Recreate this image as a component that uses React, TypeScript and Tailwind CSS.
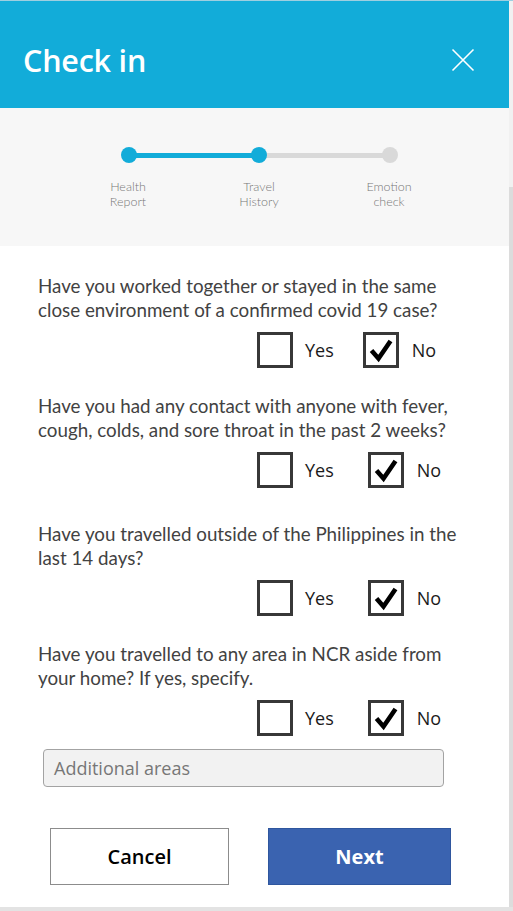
import React from "react";

type Question = {
  text: string[];
  mt: string;
  noGap: string;
};

const questions: Question[] = [
  {
    text: ["Have you worked together or stayed in the same", "close environment of a confirmed covid 19 case?"],
    mt: "mt-[28px]",
    noGap: "ml-[29px]",
  },
  {
    text: ["Have you had any contact with anyone with fever,", "cough, colds, and sore throat in the past 2 weeks?"],
    mt: "mt-[26px]",
    noGap: "ml-[34px]",
  },
  {
    text: ["Have you travelled outside of the Philippines in the", "last 14 days?"],
    mt: "mt-[34px]",
    noGap: "ml-[34px]",
  },
  {
    text: ["Have you travelled to any area in NCR aside from", "your home? If yes, specify."],
    mt: "mt-[26px]",
    noGap: "ml-[34px]",
  },
];

const steps = [
  { label: ["Health", "Report"], x: "left-[128px]" },
  { label: ["Travel", "History"], x: "left-[259px]" },
  { label: ["Emotion", "check"], x: "left-[389px]" },
];

const Box: React.FC<{ checked?: boolean }> = ({ checked }) => (
  <div className="flex h-[36px] w-[36px] shrink-0 items-center justify-center border-[3px] border-[#383838] bg-white">
    {checked && (
      <svg width="30" height="30" viewBox="0 0 30 30">
        <path d="M5.5 15.5 L12.5 23.5 L24.5 6" fill="none" stroke="#000" strokeWidth="4.6" strokeLinejoin="miter" />
      </svg>
    )}
  </div>
);

export default function App() {
  return (
    <div className="flex h-[911px] w-[513px] flex-col overflow-hidden bg-[#e3e3e3]">
      <div className="h-px w-full bg-[#9fcfe0]" />
      <div className="flex flex-1">
        <div className="flex w-[509px] flex-col bg-white">
          {/* header */}
          <div className="flex h-[107px] items-center justify-between bg-[#12acd9] pl-[23px] pr-[34px] pt-[13px]">
            <h1 className="text-[30.5px] font-semibold text-white [font-family:'Open_Sans',sans-serif] tracking-[-0.2px]">
              Check in
            </h1>
            <svg width="24" height="24" viewBox="0 0 24 24" className="mt-[-2px]">
              <path d="M1.5 1.5 L22.5 22.5 M22.5 1.5 L1.5 22.5" stroke="#fff" strokeWidth="1.6" />
            </svg>
          </div>

          {/* stepper */}
          <div className="relative h-[138px] bg-[#f7f7f7] [font-family:Lato,sans-serif]">
            <div className="absolute left-[129px] top-[45px] h-[5px] w-[130px] bg-[#12acd9]" />
            <div className="absolute left-[259px] top-[45px] h-[5px] w-[131px] bg-[#d9d9d9]" />
            <div className="absolute left-[121px] top-[39px] h-[16px] w-[16px] rounded-full bg-[#12acd9]" />
            <div className="absolute left-[251px] top-[39px] h-[16px] w-[16px] rounded-full bg-[#12acd9]" />
            <div className="absolute left-[382px] top-[39px] h-[16px] w-[16px] rounded-full bg-[#d9d9d9]" />
            {steps.map((s) => (
              <div
                key={s.label[0]}
                className={`absolute top-[71px] w-[80px] -translate-x-1/2 text-center text-[12.5px] font-light leading-[15px] text-[#777] ${s.x}`}
              >
                {s.label[0]}
                <br />
                {s.label[1]}
              </div>
            ))}
          </div>

          {/* questions */}
          <div className="flex flex-col">
            {questions.map((q, i) => (
              <div key={i} className={`flex flex-col ${q.mt}`}>
                <p className="pl-[38px] text-[18.8px] leading-[24px] text-[#424242] [font-family:Lato,sans-serif]">
                  {q.text[0]}
                  <br />
                  {q.text[1]}
                </p>
                <div className="mt-[10px] flex items-center pl-[257px] text-[18px] text-[#1a1a1a] [font-family:'Open_Sans',sans-serif]">
                  <Box />
                  <span className="ml-[12px]">Yes</span>
                  <div className={q.noGap}>
                    <Box checked />
                  </div>
                  <span className="ml-[13px]">No</span>
                </div>
              </div>
            ))}

            <div className="ml-[43px] mt-[13px] flex h-[38px] w-[401px] items-center rounded-[4px] border border-[#a3a3a3] bg-[#f2f2f2] pl-[10px] text-[18px] text-[#777] [font-family:'Open_Sans',sans-serif]">
              Additional areas
            </div>

            <div className="mt-[41px] flex pl-[50px] [font-family:'Open_Sans',sans-serif]">
              <button className="h-[57px] w-[179px] border border-[#8c8c8c] bg-white text-[20px] font-semibold text-black">
                Cancel
              </button>
              <button className="ml-[39px] h-[57px] w-[183px] border border-[#2f569e] bg-[#3a63b0] text-[20px] font-bold text-white">
                Next
              </button>
            </div>
          </div>
        </div>
        <div className="flex w-[4px] flex-col">
          <div className="h-[186px] bg-[#f1f1f1]" />
          <div className="flex-1 bg-[#dcdcdc]" />
        </div>
      </div>
      <div className="h-[4px] w-full bg-[#e3e3e3]" />
    </div>
  );
}
